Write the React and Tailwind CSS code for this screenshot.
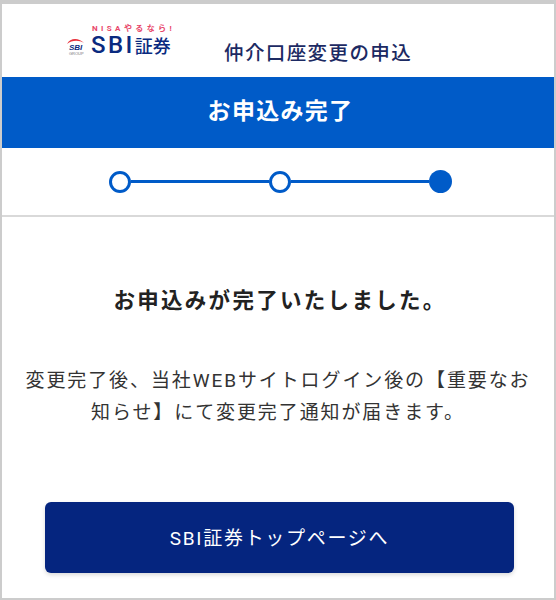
import React from 'react';

const font = { fontFamily: 'Roboto, "Noto Sans CJK JP", sans-serif' };

const Logo = () => (
  <div className="relative w-[108px] h-[33px] shrink-0">
    <span className="absolute left-[26px] top-0 text-[8px] leading-[8px] font-bold tracking-[3.4px] text-[#e8476a] whitespace-nowrap">NISAやるなら!</span>
    <svg className="absolute left-0 top-[10px]" width="24" height="24" viewBox="0 0 24 24">
      <path d="M1 9 C4 3 12 2 18 8 C13 5 6 5 1 9 Z" fill="#e8303a" />
      <text x="3" y="15" fontSize="8" fontWeight="700" fontStyle="italic" fill="#0a2a80" fontFamily="Liberation Sans">SBI</text>
      <text x="3" y="20" fontSize="4" fill="#777" fontFamily="Liberation Sans">GROUP</text>
    </svg>
    <span className="absolute left-[25px] top-[9px] text-[24px] leading-[22px] font-medium text-[#0a2a80] whitespace-nowrap tracking-[2.4px]">
      SBI<span className="text-[18px] tracking-[0px]">証券</span>
    </span>
  </div>
);

const StepDot = ({ filled }) => (
  <div className={filled ? 'w-[23px] h-[23px] rounded-full bg-[#005bc8] shrink-0' : 'w-[22px] h-[22px] rounded-full border-[3px] border-[#005bc8] bg-white shrink-0'}></div>
);

export default function App() {
  return (
    <div className="w-[556px] h-[600px] bg-white border-2 border-[#cccccc] border-t-[4px] flex flex-col overflow-hidden" style={font}>
      {/* Header */}
      <div className="h-[73px] flex items-start pl-[64px] shrink-0">
        <div className="mt-[21px]"><Logo /></div>
        <p className="ml-[50px] mt-[38px] text-[19.5px] leading-[24px] font-medium text-[#1c2a63] tracking-[1.4px] whitespace-nowrap">仲介口座変更の申込</p>
      </div>
      <div className="h-[71px] bg-[#005bc8] flex items-center justify-center shrink-0 pl-[5px]">
        <h1 className="text-[23px] font-bold text-white tracking-[1.3px]">お申込み完了</h1>
      </div>

      {/* Steps */}
      <div className="h-[69px] flex items-center justify-center border-b-2 border-[#d9d9d9] shrink-0 pl-[5px]">
        <StepDot />
        <div className="w-[138px] h-[3px] bg-[#005bc8]"></div>
        <StepDot />
        <div className="w-[138px] h-[3px] bg-[#005bc8]"></div>
        <StepDot filled />
      </div>

      {/* Message */}
      <div className="flex flex-col items-center px-[20px]">
        <h2 className="mt-[69px] ml-[4px] text-[21.5px] leading-[30px] font-bold text-[#222222] tracking-[2.3px] whitespace-nowrap">お申込みが完了いたしました。</h2>
        <p className="mt-[49px] text-[19px] leading-[32px] text-[#333333] text-center tracking-[1.9px]">変更完了後、当社WEBサイトログイン後の【重要なお知らせ】にて変更完了通知が届きます。</p>
        <button className="mt-[73px] ml-[3px] w-[469px] h-[71px] pt-[3px] bg-[#05257f] rounded-md text-white text-[19px] tracking-[1.7px] shadow-[0_2px_4px_rgba(0,0,0,0.15)]">SBI証券トップページへ</button>
      </div>
    </div>
  );
}
